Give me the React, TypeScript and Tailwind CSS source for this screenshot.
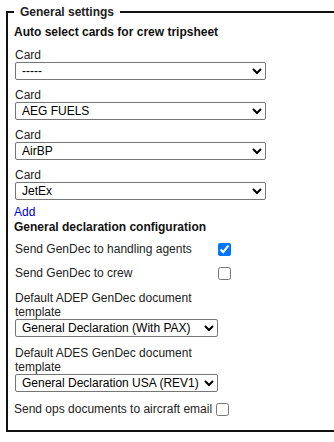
import { useState } from "react";

const cards = ["-----", "AEG FUELS", "AirBP", "JetEx"];
const cardOptions = ["-----", "AEG FUELS", "AirBP", "JetEx", "World Fuel"];
const templates = ["General Declaration (With PAX)", "General Declaration USA (REV1)"];

function Select({
  value,
  options,
  width,
}: {
  value: string;
  options: string[];
  width: string;
}) {
  return (
    <select
      defaultValue={value}
      className={`${width} ml-[1px] block h-[18px] rounded-[2px] border border-[#767676] bg-white pl-[2px] text-[12px] leading-[14px] text-black`}
    >
      {options.map((o) => (
        <option key={o}>{o}</option>
      ))}
    </select>
  );
}

export default function App() {
  const [toAgents, setToAgents] = useState(true);
  const [toCrew, setToCrew] = useState(false);
  const [opsEmail, setOpsEmail] = useState(false);

  return (
    <div
      className="h-[442px] w-[334px] overflow-hidden bg-white text-[12px] leading-[14px] text-[#222]"
      style={{ fontFamily: '"Liberation Sans", Arial, sans-serif' }}
    >
      <fieldset className="ml-[6px] mt-[5px] w-[400px] border-2 border-[#111] pb-[14px] pl-[6px] pr-2">
        <legend className="px-[6px] font-bold leading-[14px] text-[#222]">General settings</legend>

        <div className="mt-[6px] font-bold text-[#111]">Auto select cards for crew tripsheet</div>

        {cards.map((c, i) => (
          <div key={i} className={i === 0 ? "mt-[9px]" : "mt-[8px]"}>
            <div className="pl-[1px]">Card</div>
            <Select value={c} options={cardOptions} width="w-[251px]" />
          </div>
        ))}

        <a href="#" className="mt-[5px] block text-[#0000cc]">
          Add
        </a>
        <div className="mt-[1px] font-bold text-[#111]">General declaration configuration</div>

        <label className="mt-[8px] flex h-[14px] items-center">
          <span className="w-[204px] pl-[1px]">Send GenDec to handling agents</span>
          <input
            type="checkbox"
            checked={toAgents}
            onChange={() => setToAgents(!toAgents)}
            className="m-0 h-[13px] w-[13px]"
          />
        </label>
        <label className="mt-[10px] flex h-[14px] items-center">
          <span className="w-[204px] pl-[1px]">Send GenDec to crew</span>
          <input
            type="checkbox"
            checked={toCrew}
            onChange={() => setToCrew(!toCrew)}
            className="m-0 h-[13px] w-[13px]"
          />
        </label>

        <div className="mt-[11px] w-[195px] pl-[1px]">Default ADEP GenDec document template</div>
        <Select value={templates[0]} options={templates} width="w-[203px]" />

        <div className="mt-[9px] w-[195px] pl-[1px]">Default ADES GenDec document template</div>
        <Select value={templates[1]} options={templates} width="w-[203px]" />

        <label className="mt-[10px] flex h-[14px] items-center">
          <span>Send ops documents to aircraft email</span>
          <input
            type="checkbox"
            checked={opsEmail}
            onChange={() => setOpsEmail(!opsEmail)}
            className="my-0 ml-[4px] h-[13px] w-[13px]"
          />
        </label>
      </fieldset>
    </div>
  );
}
